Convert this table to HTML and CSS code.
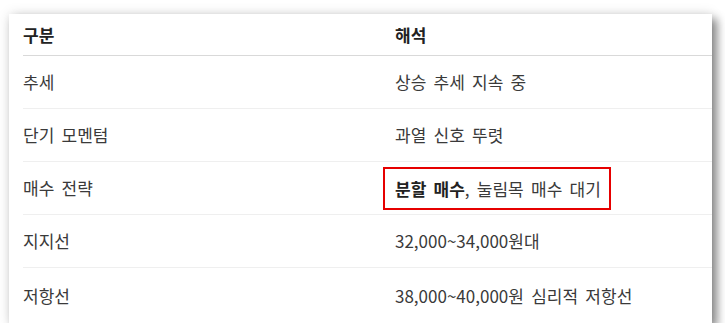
FILE: index.html
```html
<!DOCTYPE html>
<html lang="ko">
<head>
<meta charset="utf-8">
<link rel="stylesheet" href="styles.css">
</head>
<body>
<div class="card">
  <table class="tbl">
    <thead>
      <tr><th class="c1">구분</th><th>해석</th></tr>
    </thead>
    <tbody>
      <tr><td class="c1">추세</td><td>상승 추세 지속 중</td></tr>
      <tr><td class="c1">단기 모멘텀</td><td>과열 신호 뚜렷</td></tr>
      <tr><td class="c1">매수 전략</td><td><span class="mark"><strong>분할 매수</strong>, 눌림목 매수 대기</span></td></tr>
      <tr><td class="c1">지지선</td><td>32,000~34,000원대</td></tr>
      <tr class="last"><td class="c1">저항선</td><td>38,000~40,000원 심리적 저항선</td></tr>
    </tbody>
  </table>
</div>
</body>
</html>
```

FILE: styles.css
```css
html, body {
  margin: 0;
  padding: 0;
  background: #ffffff;
}
body {
  font-family: "Noto Sans CJK KR", "Noto Sans", sans-serif;
  color: #3a3a3a;
  font-size: 17px;
}
.card {
  margin: 14px 13px 0 9px;
  width: 703px;
  height: 309px;
  background: #ffffff;
  box-shadow: 5px 5px 9px rgba(0, 0, 0, 0.45), 0 0 12px rgba(0, 0, 0, 0.12);
  padding-left: 14px;
  box-sizing: border-box;
}
.tbl {
  width: 100%;
  border-collapse: collapse;
}
.tbl th, .tbl td {
  text-align: left;
  padding: 0;
  line-height: 20px;
  word-spacing: 2.5px;
  vertical-align: middle;
}
.tbl .c1 {
  width: 372px;
}
.tbl th {
  height: 41px;
  font-weight: 700;
  color: #222222;
  border-bottom: 1px solid #d9d9d9;
}
.tbl td {
  height: 52px;
  border-bottom: 1px solid #efefef;
}
.tbl tr.last td {
  border-bottom: none;
  height: 55px;
}
.mark {
  display: inline-block;
  vertical-align: middle;
  border: 2px solid #e60000;
  padding: 10px 8px 9px 10px;
  margin-left: -12px;
}
.mark strong {
  font-weight: 700;
  color: #222222;
}
```
